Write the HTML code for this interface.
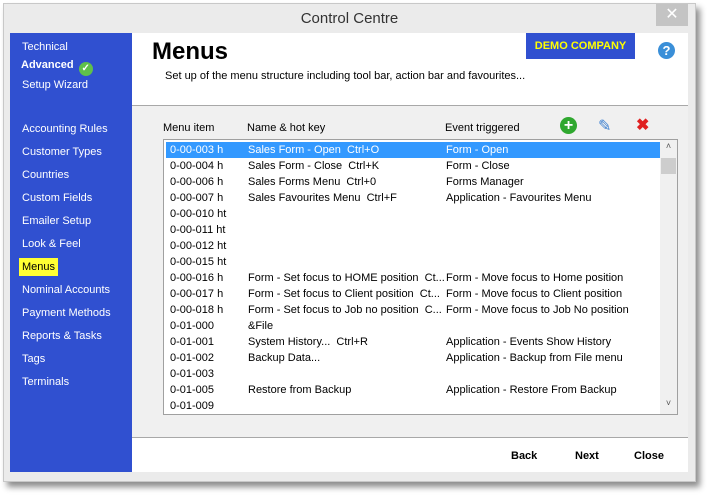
<!DOCTYPE html>
<html><head><style>
*{margin:0;padding:0;box-sizing:border-box}
body{width:707px;height:495px;background:#fff;font-family:"Liberation Sans",sans-serif;position:relative;overflow:hidden}
.win{position:absolute;left:3px;top:3px;width:693px;height:479px;background:#ebebeb;border:1px solid #c8c8c8;box-shadow:4px 5px 6px rgba(0,0,0,.45)}
.title{position:absolute;left:0;top:6px;width:100%;text-align:center;font-size:15px;color:#333}
.x{position:absolute;left:652px;top:0;width:32px;height:22px;background:#c4c4c4;color:#fff;text-align:center;font-size:16px;line-height:22px}
.side{position:absolute;left:10px;top:33px;width:122px;height:439px;background:#3050d0}
.side div{position:absolute;left:12px;color:#fff;font-size:11px}
.main{position:absolute;left:132px;top:33px;width:556px;height:439px;background:#fff}
.grey{position:absolute;left:0;top:72px;width:556px;height:333px;background:#f0f0f0;border-top:1px solid #a8a8a8;border-bottom:1px solid #a8a8a8}
.t{position:absolute;font-size:11px;color:#000;white-space:nowrap}
.list{position:absolute;left:31px;top:106px;width:515px;height:276px;background:#fff;border:1px solid #a0a0a0}
.row{position:absolute;left:2px;width:494px;height:16px;font-size:11px;line-height:16px;white-space:nowrap}
.row span{position:absolute}
.sel{background:#3399ff;color:#fff}
.btn{position:absolute;top:417px;font-size:11px;font-weight:bold}
</style></head><body>
<div class="win">
<div class="title">Control Centre</div>
<div class="x">✕</div>
</div>
<div class="side">
<div style="top:8px">Technical</div>
<div style="top:26px;left:11px;font-weight:bold">Advanced <span style="display:inline-block;width:14px;height:14px;border-radius:50%;background:#5fc04a;vertical-align:-3px;font-size:10px;text-align:center;line-height:14px;margin-left:2px">✓</span></div>
<div style="top:46px">Setup Wizard</div>
<div style="top:90px">Accounting Rules</div>
<div style="top:113px">Customer Types</div>
<div style="top:136px">Countries</div>
<div style="top:159px">Custom Fields</div>
<div style="top:182px">Emailer Setup</div>
<div style="top:205px">Look &amp; Feel</div>
<div style="top:225px;left:9px;background:#ffff33;color:#000;padding:3px 3px">Menus</div>
<div style="top:251px">Nominal Accounts</div>
<div style="top:274px">Payment Methods</div>
<div style="top:297px">Reports &amp; Tasks</div>
<div style="top:320px">Tags</div>
<div style="top:343px">Terminals</div>
</div>
<div class="main">
<div class="t" style="left:20px;top:5px;font-size:24px;font-weight:bold">Menus</div>
<div class="t" style="left:33px;top:37px;font-size:11px">Set up of the menu structure including tool bar, action bar and favourites...</div>
<div style="position:absolute;left:394px;top:0;width:109px;height:26px;background:#3050d0;color:#ffff00;font-weight:bold;font-size:11px;text-align:center;line-height:26px">DEMO COMPANY</div>
<div style="position:absolute;left:526px;top:9px;width:17px;height:17px;border-radius:50%;background:#3a8fd8;color:#fff;font-weight:bold;font-size:13px;text-align:center;line-height:17px">?</div>
<div class="grey">
<div class="t" style="left:31px;top:16px">Menu item</div>
<div class="t" style="left:115px;top:16px">Name &amp; hot key</div>
<div class="t" style="left:313px;top:16px">Event triggered</div>
<div style="position:absolute;left:428px;top:11px;width:17px;height:17px;border-radius:50%;background:#2fa82f;color:#fff;font-weight:bold;font-size:16px;text-align:center;line-height:17px">+</div>
<div style="position:absolute;left:466px;top:10px;font-size:16px;color:#3a7fd0">✎</div>
<div style="position:absolute;left:504px;top:9px;font-size:16px;color:#e02020;font-weight:bold">✖</div>
</div>
<div class="list">
<div class="row sel" style="top:2px"><span style="left:4px">0-00-003 h</span><span style="left:82px">Sales Form - Open&nbsp; Ctrl+O</span><span style="left:280px">Form - Open</span></div>
<div class="row" style="top:18px"><span style="left:4px">0-00-004 h</span><span style="left:82px">Sales Form - Close&nbsp; Ctrl+K</span><span style="left:280px">Form - Close</span></div>
<div class="row" style="top:34px"><span style="left:4px">0-00-006 h</span><span style="left:82px">Sales Forms Menu&nbsp; Ctrl+0</span><span style="left:280px">Forms Manager</span></div>
<div class="row" style="top:50px"><span style="left:4px">0-00-007 h</span><span style="left:82px">Sales Favourites Menu&nbsp; Ctrl+F</span><span style="left:280px">Application - Favourites Menu</span></div>
<div class="row" style="top:66px"><span style="left:4px">0-00-010 ht</span></div>
<div class="row" style="top:82px"><span style="left:4px">0-00-011 ht</span></div>
<div class="row" style="top:98px"><span style="left:4px">0-00-012 ht</span></div>
<div class="row" style="top:114px"><span style="left:4px">0-00-015 ht</span></div>
<div class="row" style="top:130px"><span style="left:4px">0-00-016 h</span><span style="left:82px">Form - Set focus to HOME position&nbsp; Ct...</span><span style="left:280px">Form - Move focus to Home position</span></div>
<div class="row" style="top:146px"><span style="left:4px">0-00-017 h</span><span style="left:82px">Form - Set focus to Client position&nbsp; Ct...</span><span style="left:280px">Form - Move focus to Client position</span></div>
<div class="row" style="top:162px"><span style="left:4px">0-00-018 h</span><span style="left:82px">Form - Set focus to Job no position&nbsp; C...</span><span style="left:280px">Form - Move focus to Job No position</span></div>
<div class="row" style="top:178px"><span style="left:4px">0-01-000</span><span style="left:82px">&amp;File</span></div>
<div class="row" style="top:194px"><span style="left:4px">0-01-001</span><span style="left:82px">System History...&nbsp; Ctrl+R</span><span style="left:280px">Application - Events Show History</span></div>
<div class="row" style="top:210px"><span style="left:4px">0-01-002</span><span style="left:82px">Backup Data...</span><span style="left:280px">Application - Backup from File menu</span></div>
<div class="row" style="top:226px"><span style="left:4px">0-01-003</span></div>
<div class="row" style="top:242px"><span style="left:4px">0-01-005</span><span style="left:82px">Restore from Backup</span><span style="left:280px">Application - Restore From Backup</span></div>
<div class="row" style="top:258px"><span style="left:4px">0-01-009</span></div>
<div style="position:absolute;left:496px;top:0;width:17px;height:274px;background:#f0f0f0">
<div style="position:absolute;top:1px;width:17px;text-align:center;font-size:9px;color:#555">˄</div>
<div style="position:absolute;top:18px;left:1px;width:15px;height:16px;background:#cdcdcd"></div>
<div style="position:absolute;top:258px;width:17px;text-align:center;font-size:9px;color:#555">˅</div>
</div>
</div>
<div class="btn" style="left:379px">Back</div>
<div class="btn" style="left:443px">Next</div>
<div class="btn" style="left:502px">Close</div>
</div>
</body></html>
